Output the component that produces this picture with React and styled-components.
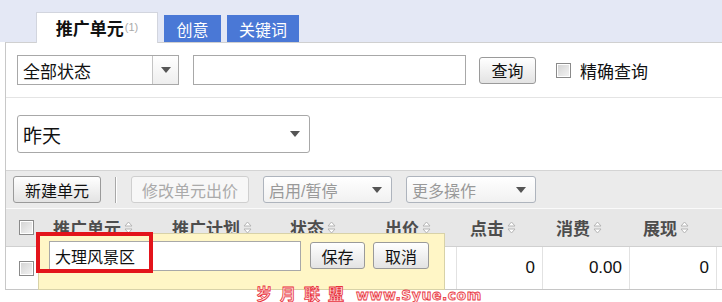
import React from 'react';
import styled, { createGlobalStyle } from 'styled-components';

const Global = createGlobalStyle`
  html, body { margin: 0; padding: 0; background: #fff; }
  body {
    font-family: "Liberation Sans", "Noto Sans CJK SC", sans-serif;
    font-size: 16px;
    color: #222;
    width: 722px;
    height: 302px;
    overflow: hidden;
  }
  * { box-sizing: border-box; }
`;

const Page = styled.div`
  position: relative;
  width: 722px;
  height: 302px;
  overflow: hidden;
  background: #fff;
`;

const TabBar = styled.div`
  display: flex;
  align-items: flex-end;
  gap: 6px;
  height: 42px;
  padding-left: 36px;
  background: #e4e8f5;
`;

const Tab = styled.div`
  display: flex;
  align-items: center;
  justify-content: center;
  width: ${p => p.$w}px;
  height: ${p => (p.$active ? 31 : 27)}px;
  margin-bottom: ${p => (p.$active ? -1 : 0)}px;
  padding-bottom: ${p => (p.$active ? 2 : 0)}px;
  position: relative;
  z-index: 1;
  font-size: ${p => (p.$active ? 17 : 16)}px;
  font-weight: ${p => (p.$active ? 700 : 400)};
  color: ${p => (p.$active ? '#111' : '#fff')};
  background: ${p => (p.$active ? '#fff' : '#4a78d6')};
  border: ${p => (p.$active ? '1px solid #d2d5de' : 'none')};
  border-bottom: none;
`;

const Count = styled.span`
  font-size: 11px;
  font-weight: 400;
  color: #aaa;
  margin-left: 1px;
`;

const Panel = styled.div`
  margin-left: 5px;
  border-left: 1px solid #c8c8c8;
  border-top: 1px solid #d0d0d0;
`;

const SearchRow = styled.div`
  display: flex;
  align-items: center;
  height: 55px;
  padding-left: 11px;
  border-bottom: 1px solid #e4e4e4;
`;

const SelectBox = styled.div`
  display: flex;
  align-items: center;
  width: ${p => p.$w}px;
  height: ${p => p.$h}px;
  margin-right: ${p => p.$mr || 0}px;
  border: 1px solid ${p => (p.$muted ? '#aeb4bd' : '#a8a8a8')};
  border-radius: ${p => p.$r || 0}px;
  background: ${p => (p.$muted ? 'linear-gradient(#fff, #f1f1f1)' : '#fff')};
  font-size: ${p => p.$fs || 16}px;
  color: ${p => (p.$muted ? '#999' : '#111')};
  padding-left: ${p => p.$pl || 5}px;
`;

const SelectText = styled.span`
  flex: 1;
`;

const ArrowCell = styled.div`
  display: flex;
  align-items: center;
  justify-content: center;
  width: ${p => p.$w}px;
  align-self: stretch;
  border-left: ${p => (p.$divided ? '1px solid #c4c4c4' : 'none')};
  background: ${p => (p.$divided ? 'linear-gradient(#fff, #eee)' : 'transparent')};
`;

const Arrow = styled.span`
  width: 0;
  height: 0;
  border-left: 5px solid transparent;
  border-right: 5px solid transparent;
  border-top: 6px solid #555;
`;

const TextInput = styled.div`
  width: ${p => p.$w}px;
  height: 30px;
  margin-right: ${p => p.$mr || 0}px;
  border: 1px solid #a8a8a8;
  background: #fff;
  display: flex;
  align-items: center;
  padding-left: 5px;
  font-size: 16px;
  color: #111;
`;

const Button = styled.div`
  display: flex;
  align-items: center;
  justify-content: center;
  width: ${p => p.$w}px;
  height: 27px;
  margin-right: ${p => p.$mr || 0}px;
  margin-top: ${p => p.$mt || 0}px;
  border: 1px solid ${p => (p.$disabled ? '#cfcfcf' : '#9a9a9a')};
  border-radius: 3px;
  background: ${p => (p.$disabled ? '#f7f7f7' : 'linear-gradient(#ffffff, #e3e3e3)')};
  color: ${p => (p.$disabled ? '#aaa' : '#111')};
  font-size: 16px;
  flex-shrink: 0;
`;

const Check = styled.span`
  display: inline-block;
  width: 15px;
  height: 15px;
  border: 1px solid #8a8a8a;
  background: linear-gradient(135deg, #d2d2d2, #f5f5f5);
  box-shadow: inset 0 0 0 1px #fff;
  margin-right: ${p => p.$mr || 0}px;
`;

const Label = styled.span`
  font-size: 17px;
  color: #111;
`;

const DateRow = styled.div`
  display: flex;
  align-items: center;
  height: 73px;
  padding-left: 11px;
  border-bottom: 1px solid #d4d4d4;
`;

const Toolbar = styled.div`
  display: flex;
  align-items: center;
  gap: 14px;
  height: 38px;
  padding-left: 7px;
  background: #ebebeb;
  border-bottom: 1px solid #fafafa;
`;

const Sep = styled.span`
  width: 2px;
  height: 26px;
  background: linear-gradient(90deg, #a8a8a8 50%, #fff 50%);
`;

const Row = styled.div`
  display: grid;
  grid-template-columns: 34px 119px 118px 95px 85px 86px 87px 87px 1fr;
  height: ${p => p.$h}px;
  background: ${p => (p.$head ? '#e7e7e7' : '#fff')};
  border-bottom: 1px solid ${p => (p.$head ? '#d0d0d0' : '#c6c6c6')};
`;

const Cell = styled.div`
  display: flex;
  align-items: center;
  justify-content: ${p => (p.$right ? 'flex-end' : 'flex-start')};
  padding: ${p => (p.$right ? '0 7px 0 0' : '0 0 0 13px')};
  border-right: ${p => (p.$line ? '1px solid #e2e2e2' : 'none')};
  font-size: 17px;
  font-weight: ${p => (p.$head ? 700 : 400)};
  color: ${p => (p.$head ? '#4d4d4d' : '#111')};
`;

const SortIcon = () => (
  <svg width="9" height="13" viewBox="0 0 9 13" style={{ marginLeft: 3 }}>
    <polygon points="4.5,1 8,5 1,5" fill="#fff" stroke="#b5b5b5" strokeWidth="1" />
    <polygon points="1,8 8,8 4.5,12" fill="#fff" stroke="#b5b5b5" strokeWidth="1" />
  </svg>
);

const Popup = styled.div`
  position: absolute;
  left: 38px;
  top: 233px;
  width: 407px;
  height: 57px;
  display: flex;
  align-items: flex-start;
  padding: 7px 0 0 10px;
  background: #fff6c6;
  border: 1px solid #d8d2a8;
  z-index: 2;
`;

const Highlight = styled.div`
  position: absolute;
  left: 36px;
  top: 232px;
  width: 117px;
  height: 41px;
  border: 4px solid #e3141b;
  z-index: 3;
`;

const Watermark = styled.div`
  position: absolute;
  left: 256px;
  top: 281px;
  z-index: 4;
  display: flex;
  align-items: baseline;
  gap: 4px;
  color: #ffe3e3;
  -webkit-text-stroke: 0.8px #e8323c;
  font-weight: 700;
  white-space: nowrap;
`;

const WmCn = styled.span`
  font-size: 16px;
  letter-spacing: 8px;
`;

const WmEn = styled.span`
  font-family: "DejaVu Sans", sans-serif;
  font-size: 14px;
  letter-spacing: 0.5px;
`;

const heads = ['推广单元', '推广计划', '状态', '出价', '点击', '消费', '展现'];

export default function App() {
  return (
    <Page>
      <Global />
      <TabBar>
        <Tab $active $w={122}>推广单元<Count>(1)</Count></Tab>
        <Tab $w={57}>创意</Tab>
        <Tab $w={72}>关键词</Tab>
      </TabBar>
      <Panel>
        <SearchRow>
          <SelectBox $w={162} $h={30} $mr={14} $fs={17}>
            <SelectText>全部状态</SelectText>
            <ArrowCell $w={26} $divided><Arrow /></ArrowCell>
          </SelectBox>
          <TextInput $w={273} $mr={13} />
          <Button $w={57} $mr={20}>查询</Button>
          <Check $mr={9} />
          <Label>精确查询</Label>
        </SearchRow>
        <DateRow>
          <SelectBox $w={293} $h={38} $r={3} $fs={19} $pl={5}>
            <SelectText>昨天</SelectText>
            <ArrowCell $w={28}><Arrow /></ArrowCell>
          </SelectBox>
        </DateRow>
        <Toolbar>
          <Button $w={88}>新建单元</Button>
          <Sep />
          <Button $w={118} $disabled>修改单元出价</Button>
          <SelectBox $w={129} $h={27} $r={3} $muted $pl={5}>
            <SelectText>启用/暂停</SelectText>
            <ArrowCell $w={28}><Arrow /></ArrowCell>
          </SelectBox>
          <SelectBox $w={130} $h={27} $r={3} $muted $pl={5}>
            <SelectText>更多操作</SelectText>
            <ArrowCell $w={28}><Arrow /></ArrowCell>
          </SelectBox>
        </Toolbar>
        <Row $head $h={38}>
          <Cell><Check /></Cell>
          {heads.map(h => (
            <Cell key={h} $head>{h}<SortIcon /></Cell>
          ))}
          <Cell />
        </Row>
        <Row $h={43}>
          <Cell><Check /></Cell>
          <Cell />
          <Cell />
          <Cell />
          <Cell $line />
          <Cell $right $line>0</Cell>
          <Cell $right $line>0.00</Cell>
          <Cell $right $line>0</Cell>
          <Cell />
        </Row>
      </Panel>
      <Popup>
        <TextInput $w={252} $mr={9}>大理风景区</TextInput>
        <Button $w={55} $mr={8} $mt={1}>保存</Button>
        <Button $w={56} $mt={1}>取消</Button>
      </Popup>
      <Highlight />
      <Watermark>
        <WmCn>岁月联盟</WmCn>
        <WmEn>www.Syue.com</WmEn>
      </Watermark>
    </Page>
  );
}
